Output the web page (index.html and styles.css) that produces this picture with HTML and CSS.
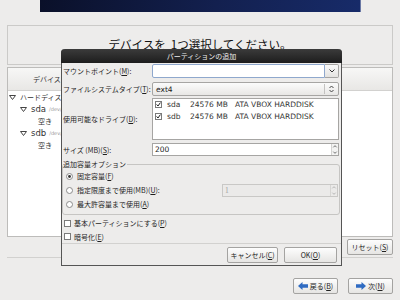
FILE: index.html
```html
<!DOCTYPE html>
<html>
<head>
<meta charset="utf-8">
<title>パーティションの追加</title>
<link rel="stylesheet" href="styles.css">
</head>
<body>
<div class="banner"></div>
<div class="main">
	<div class="prompt">デバイスを&nbsp;&nbsp;1つ選択してください。</div>
	<div class="devices">
		<div class="devhead"><span>デバイス</span></div>
		<div class="devlist">
			<div class="node lv0"><svg class="tri" width="7" height="5" viewBox="0 0 7 5"><path d="M.5 .5H6.5L3.5 4.5Z" fill="none" stroke="#444"/></svg>ハードディスク</div>
			<div class="node lv1"><svg class="tri" width="7" height="5" viewBox="0 0 7 5"><path d="M.5 .5H6.5L3.5 4.5Z" fill="none" stroke="#444"/></svg><span class="dev">sda</span><span class="path">/dev/sda</span></div>
			<div class="node lv2">空き</div>
			<div class="node lv1"><svg class="tri" width="7" height="5" viewBox="0 0 7 5"><path d="M.5 .5H6.5L3.5 4.5Z" fill="none" stroke="#444"/></svg><span class="dev">sdb</span><span class="path">/dev/sdb</span></div>
			<div class="node lv2">空き</div>
		</div>
	</div>
	<div class="resetrow"><div class="btn reset">リセット(<u>S</u>)</div></div>
	<div class="sep"></div>
	<div class="nav">
		<div class="btn navbtn">
			<svg width="10" height="8" viewBox="0 0 10 8"><path d="M0 4L4.5 0V2.2H10V5.8H4.5V8Z" fill="#2f6bc2"/></svg>
			<span>戻る(<u>B</u>)</span>
		</div>
		<div class="btn navbtn">
			<svg width="10" height="8" viewBox="0 0 10 8"><path d="M10 4L5.5 0V2.2H0V5.8H5.5V8Z" fill="#2f6bc2"/></svg>
			<span>次(<u>N</u>)</span>
		</div>
	</div>
</div>

<div class="dialog">
	<div class="dtitle">パーティションの追加</div>
	<div class="dbody">
		<div class="row r1">
			<div class="lab">マウントポイント(<u>M</u>):</div>
			<div class="combo">
				<div class="centry"></div>
				<div class="cbtn"><svg width="6" height="4" viewBox="0 0 6 4"><path d="M.5 .5L3 3L5.5 .5" fill="none" stroke="#333"/></svg></div>
			</div>
		</div>
		<div class="row r2">
			<div class="lab">ファイルシステムタイプ(<u>T</u>):</div>
			<div class="select">
				<span class="val">ext4</span>
				<span class="vline"></span>
				<span class="ud"><svg width="5" height="8" viewBox="0 0 5 8"><path d="M.5 3L2.5 1L4.5 3M.5 5L2.5 7L4.5 5" fill="none" stroke="#444"/></svg></span>
			</div>
		</div>
		<div class="row r3">
			<div class="lab">使用可能なドライブ(<u>D</u>):</div>
			<div class="drives">
				<div class="drive">
					<svg width="7" height="7" viewBox="0 0 7 7"><rect x=".5" y=".5" width="6" height="6" fill="#fff" stroke="#7a7a7a"/><path d="M1.6 3.4L3 5L5.4 1.6" fill="none" stroke="#222"/></svg>
					<span>sda</span><span>24576 MB</span><span>ATA VBOX HARDDISK</span>
				</div>
				<div class="drive">
					<svg width="7" height="7" viewBox="0 0 7 7"><rect x=".5" y=".5" width="6" height="6" fill="#fff" stroke="#7a7a7a"/><path d="M1.6 3.4L3 5L5.4 1.6" fill="none" stroke="#222"/></svg>
					<span>sdb</span><span>24576 MB</span><span>ATA VBOX HARDDISK</span>
				</div>
			</div>
		</div>
		<div class="row r4">
			<div class="lab">サイズ (MB)(<u>S</u>):</div>
			<div class="spin">
				<span class="val">200</span>
				<span class="arrows">
					<svg width="6" height="6" viewBox="0 0 6 6"><path d="M1 4L3 2L5 4" fill="none" stroke="#555"/></svg>
					<svg width="6" height="6" viewBox="0 0 6 6"><path d="M1 2L3 4L5 2" fill="none" stroke="#555"/></svg>
				</span>
			</div>
		</div>
		<fieldset class="frame">
			<legend>追加容量オプション</legend>
			<div class="opt">
				<svg width="7" height="7" viewBox="0 0 7 7"><circle cx="3.5" cy="3.5" r="3" fill="#fff" stroke="#8a8a8a"/><circle cx="3.5" cy="3.5" r="1.4" fill="#333"/></svg>
				<span>固定容量(<u>F</u>)</span>
			</div>
			<div class="opt">
				<svg width="7" height="7" viewBox="0 0 7 7"><circle cx="3.5" cy="3.5" r="3" fill="#fff" stroke="#8a8a8a"/></svg>
				<span>指定限度まで使用(MB)(<u>U</u>):</span>
				<div class="spin off">
					<span class="val">1</span>
					<span class="arrows">
						<svg width="6" height="6" viewBox="0 0 6 6"><path d="M1 4L3 2L5 4" fill="none" stroke="#aaa"/></svg>
						<svg width="6" height="6" viewBox="0 0 6 6"><path d="M1 2L3 4L5 2" fill="none" stroke="#aaa"/></svg>
					</span>
				</div>
			</div>
			<div class="opt">
				<svg width="7" height="7" viewBox="0 0 7 7"><circle cx="3.5" cy="3.5" r="3" fill="#fff" stroke="#8a8a8a"/></svg>
				<span>最大許容量まで使用(<u>A</u>)</span>
			</div>
		</fieldset>
		<div class="chk c1">
			<svg width="7" height="7" viewBox="0 0 7 7"><rect x=".5" y=".5" width="6" height="6" fill="#fff" stroke="#7a7a7a"/></svg>
			<span>基本パーティションにする(<u>P</u>)</span>
		</div>
		<div class="chk c2">
			<svg width="7" height="7" viewBox="0 0 7 7"><rect x=".5" y=".5" width="6" height="6" fill="#fff" stroke="#7a7a7a"/></svg>
			<span>暗号化(<u>E</u>)</span>
		</div>
		<div class="dsep"></div>
		<div class="dbtns">
			<div class="btn cancel">キャンセル(<u>C</u>)</div>
			<div class="btn ok">OK(<u>O</u>)</div>
		</div>
	</div>
</div>
</body>
</html>
```

FILE: styles.css
```css
*{margin: 0;padding: 0;box-sizing: border-box;}
body{
	width: 400px;
	height: 300px;
	overflow: hidden;
	position: relative;
	background: #edeceb;
	font-family: "Noto Sans CJK JP", "DejaVu Sans", sans-serif;
	font-size: 7px;
	color: #1e1e1e;
	white-space: nowrap;
}
u{text-decoration: underline;}
svg{display: block;flex: none;}

/* 背景の画面 */
.banner{
	margin-left: 40px;
	width: 321px;
	height: 12px;
	background: linear-gradient(100deg, #0a1029, #13204f 55%, #172b69);
	border-right: 1px solid #6a78a4;
}
.main{padding: 0 7px;}
.prompt{
	margin-top: 13px;
	height: 40px;
	border: 1px solid #cbcac8;
	display: flex;
	align-items: center;
	justify-content: center;
	padding-bottom: 1px;
	font-size: 11.5px;
	line-height: 1;
	color: #111;
}
.devices{
	margin-top: 2px;
	height: 170px;
	border: 1px solid #bdbcba;
	background: #fff;
}
.devhead{
	height: 23px;
	background: linear-gradient(#f7f7f6, #e8e7e5);
	border-bottom: 1px solid #d2d1cf;
	display: flex;
	align-items: center;
	padding-left: 25px;
	color: #333;
}
.node{
	height: 12px;
	display: flex;
	align-items: center;
	color: #333;
}
.node .tri{margin-right: 4px;}
.lv0{padding-left: 1px;}
.lv1{padding-left: 12px;}
.lv2{padding-left: 30px;}
.dev{font-family: "DejaVu Sans", sans-serif;font-size: 8.5px;margin-right: 3px;}
.path{font-family: "DejaVu Sans", sans-serif;font-size: 5px;color: #999;}

.btn{
	height: 16px;
	border: 1px solid #a4a3a1;
	border-radius: 2px;
	background: linear-gradient(#fdfdfd, #e6e5e3);
	display: flex;
	align-items: center;
	justify-content: center;
	color: #222;
}
.resetrow{
	display: flex;
	justify-content: flex-end;
	padding-top: 2px;
}
.reset{width: 46px;}
.sep{
	margin-top: 2px;
	border-top: 1px solid #d2d1cf;
}
.nav{
	display: flex;
	justify-content: flex-end;
	gap: 10px;
	margin-top: 20px;
}
.navbtn{width: 45px;gap: 2px;}

/* ダイアログ */
.dialog{
	position: absolute;
	left: 61px;
	top: 49px;
	width: 281px;
	height: 217px;
	background: #edeceb;
	border: 1px solid #555;
	border-top: none;
	border-radius: 4px 4px 0 0;
}
.dtitle{
	height: 14px;
	margin: 0 -1px;
	border-radius: 4px 4px 0 0;
	background: linear-gradient(#3b3b3b, #1d1d1d);
	color: #eee;
	text-align: center;
	line-height: 14px;
}
.dbody{padding: 1px 2px 0 1px;}
.row{
	display: flex;
	align-items: center;
}
.lab{width: 89px;flex: none;}
.r2{margin-top: 4px;}
.r3{margin-top: 2px;}
.r4{margin-top: 3px;}

.combo{
	display: flex;
	width: 187px;
	height: 14px;
}
.centry{
	flex: 1;
	background: #fff;
	border: 1px solid #8fa8cd;
	border-radius: 2px 0 0 2px;
}
.cbtn{
	width: 14px;
	border: 1px solid #a6a5a3;
	border-left: none;
	border-radius: 0 2px 2px 0;
	background: linear-gradient(#f9f9f9, #e4e3e1);
	display: flex;
	align-items: center;
	justify-content: center;
}
.val{font-family: "DejaVu Sans", sans-serif;font-size: 7.5px;}
.select{
	width: 187px;
	height: 14px;
	border: 1px solid #a6a5a3;
	border-radius: 2px;
	background: linear-gradient(#fbfbfb, #e8e7e5);
	display: flex;
	align-items: center;
	padding-left: 3px;
}
.select .val{flex: 1;}
.vline{
	width: 1px;
	height: 10px;
	background: #c3c2c0;
}
.ud{
	width: 13px;
	display: flex;
	justify-content: center;
}
.drives{
	width: 187px;
	height: 42px;
	background: #fff;
	border: 1px solid #a6a5a3;
}
.drive{
	display: grid;
	grid-template-columns: 12px 23px 45px 1fr;
	align-items: center;
	height: 11px;
	margin-bottom: 1px;
	padding-left: 2px;
	font-family: "DejaVu Sans", sans-serif;
	font-size: 7.5px;
	color: #333;
}
.spin{
	width: 187px;
	height: 13px;
	background: #fff;
	border: 1px solid #a6a5a3;
	display: flex;
	align-items: center;
	padding-left: 2px;
}
.spin .val{flex: 1;}
.arrows{
	width: 7px;
	height: 100%;
	display: flex;
	flex-direction: column;
	justify-content: space-between;
	border-left: 1px solid #d4d3d1;
	background: #f3f3f2;
}
.arrows svg{height: 5px;}

.frame{
	margin: 3px 0 0 -1px;
	width: 278px;
	border: 1px solid #c6c5c3;
	border-radius: 3px;
	padding: 0 0 3px 0;
}
.frame legend{
	line-height: 10px;
	padding: 0 1px 0 0;
	margin-left: 0;
}
.opt{
	height: 14px;
	display: flex;
	align-items: center;
	gap: 4px;
	padding-left: 3px;
}
.spin.off{
	width: 116px;
	margin-left: auto;
	margin-right: 1px;
	background: #ebeae9;
	border-color: #c9c8c6;
	color: #a0a0a0;
}
.spin.off .val{font-family: "Liberation Serif", serif;}
.spin.off .arrows{background: #ebeae9;border-color: #d6d5d3;}
.chk{
	display: flex;
	align-items: center;
	gap: 3px;
	padding-left: 1px;
}
.c1{height: 14px;margin-top: 1px;}
.c2{height: 13px;}
.dsep{
	margin: 0 -2px 0 -1px;
	border-top: 1px solid #d2d1cf;
}
.dbtns{
	display: flex;
	justify-content: flex-end;
	gap: 6px;
	margin-top: 3px;
	padding-right: 2px;
}
.cancel{width: 51px;}
.ok{width: 53px;}
```
